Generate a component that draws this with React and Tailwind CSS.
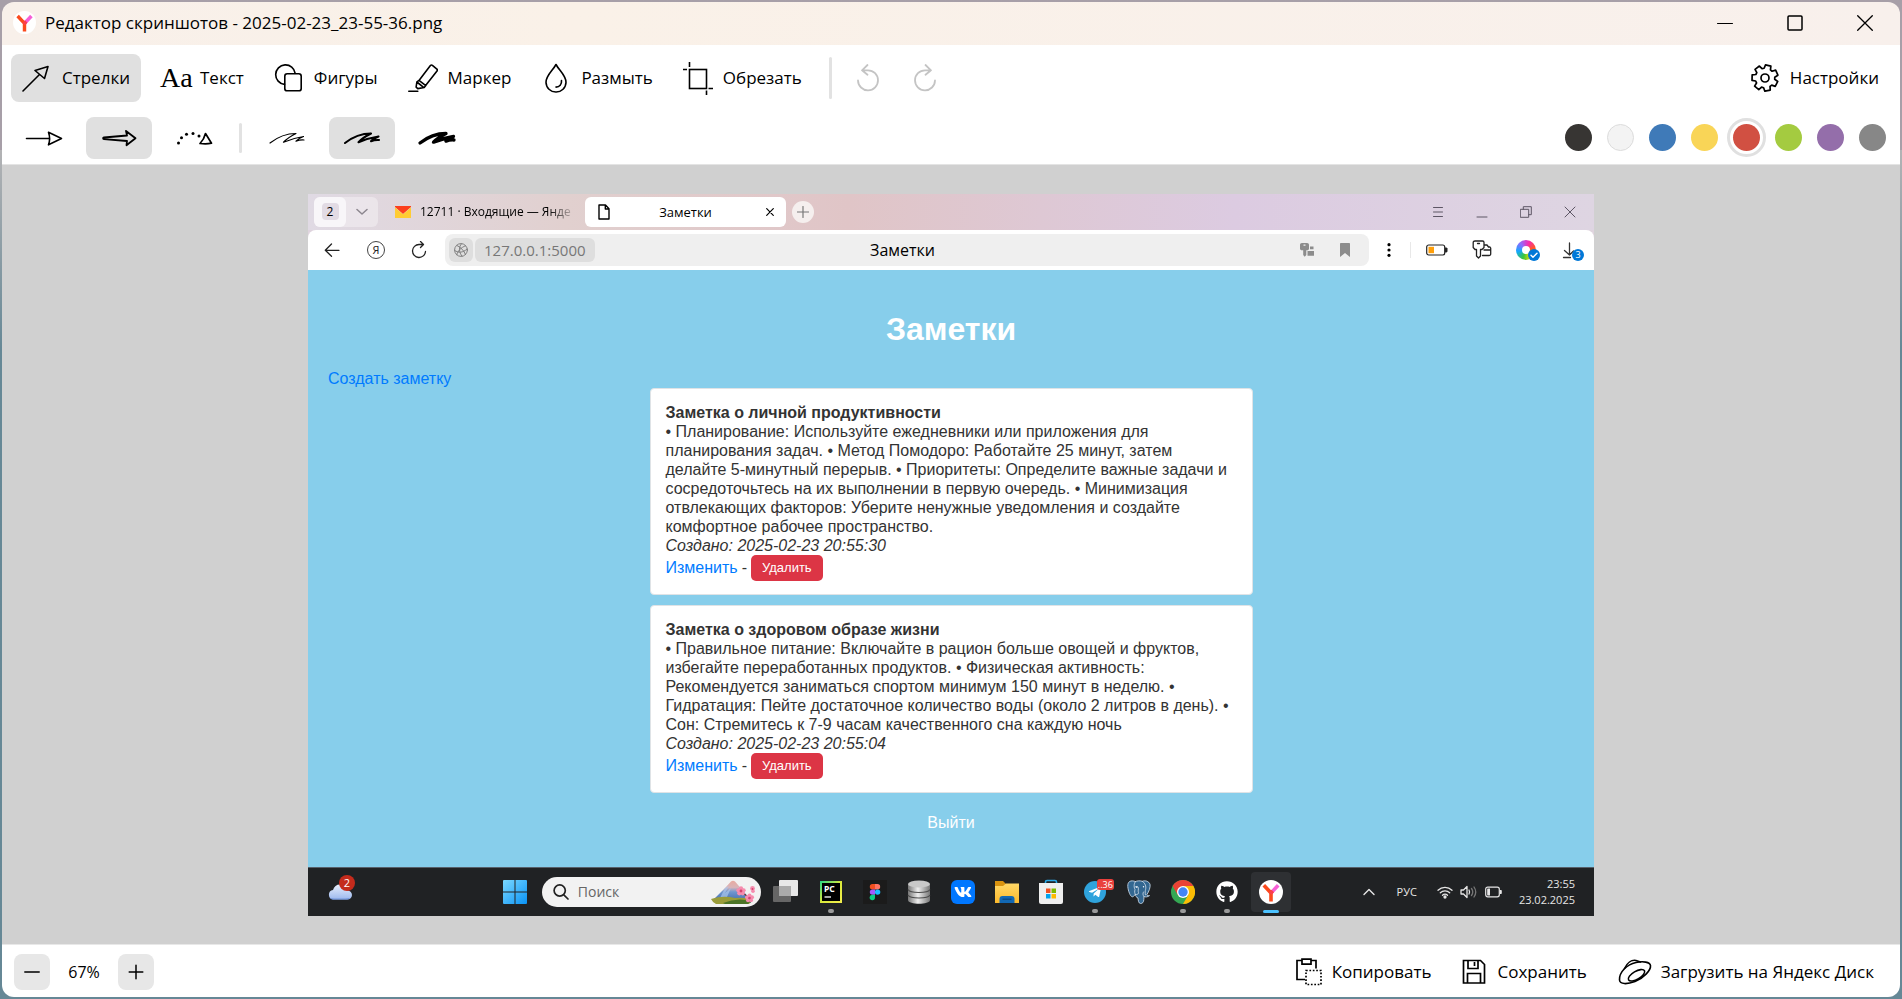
import React from "react";
import { FaVk, FaGithub, FaTelegramPlane } from "react-icons/fa";

const line = { fill: "none", stroke: "currentColor", strokeLinecap: "round", strokeLinejoin: "round" };

function YandexMark({ className }) {
  return (
    <svg viewBox="0 0 24 24" className={className} aria-hidden="true">
      <circle cx="12" cy="12" r="12" fill="#fff" />
      <g fill="none" strokeWidth="3.6">
        <path d="M19.2 5.2 12.2 12.8" stroke="#f65fd6" />
        <path d="M4.8 5.2 12 12.9V21.5" stroke="#fb4a1d" />
        <path d="M13.8 10.9 11.2 13.6" stroke="#fb3f4c" />
      </g>
    </svg>
  );
}

/* ---------- editor toolbar icons ---------- */

const ArrowToolIcon = () => (
  <svg viewBox="0 0 30 30" className="h-[30px] w-[30px]" {...line} strokeWidth="1.6" aria-hidden="true">
    <path d="M1 28 17.5 11.5M13 7.5 26 3.5 22.5 15.5Z" />
  </svg>
);
const ShapesIcon = () => (
  <svg viewBox="0 0 30 30" className="h-[30px] w-[30px]" {...line} strokeWidth="1.6" aria-hidden="true">
    <path d="M10.5 21.4A9.8 9.8 0 1 1 21.2 10.3" />
    <rect x="10.8" y="10.8" width="16.4" height="17" rx="2.4" />
  </svg>
);
const MarkerIcon = () => (
  <svg viewBox="0 0 30 30" className="h-[30px] w-[30px]" {...line} strokeWidth="1.6" aria-hidden="true">
    <path d="M.8 28.2h9M11 17.4 22.4 2.6c.6-.7 1.4-.7 2-.2l4.5 3.8c.6.5.6 1.2.1 1.9L17.8 22.3M11 17.4l6.800 5.200-1.600 1.900-6.400 1.100-1.700-1.500.8-5.200ZM9.500 19.500l5.800 4.600" />
  </svg>
);
const DropIcon = () => (
  <svg viewBox="0 0 30 30" className="h-[30px] w-[30px]" {...line} strokeWidth="1.6" aria-hidden="true">
    <path d="M15 1.500c3.500 6.500 10 11 10 17.800A9.800 9.800 0 0 1 15 29a9.800 9.800 0 0 1-10-9.700C5 12.500 11.500 8 15 1.500Z" />
    <path d="M20.500 17.500c.4 4-2 6.500-5.500 6.600" />
  </svg>
);
const CropIcon = () => (
  <svg viewBox="0 0 30 30" className="h-[30px] w-[30px] overflow-visible" {...line} strokeWidth="1.6" strokeLinecap="butt" strokeLinejoin="miter" aria-hidden="true">
    <rect x="6.500" y="6.500" width="17" height="19" />
    <path d="M6.500-1v5M0 6.500h4M23.500 27.500V32M25.500 25.500H30" />
  </svg>
);
const UndoIcon = ({ flip }) => (
  <svg viewBox="0 0 24 30" className={flip ? "h-[30px] w-6 -scale-x-100" : "h-[30px] w-6"} {...line} strokeWidth="1.8" aria-hidden="true">
    <path d="M2 17.500A10 10 0 1 0 12 7.300H6M11.500 2 6 7.300l5.500 4.500" />
  </svg>
);

const gearPath = (() => {
  const teeth = 7;
  const points = [];
  for (let i = 0; i < teeth; i++) {
    const mid = (i / teeth) * Math.PI * 2 - Math.PI / 2 + 0.25;
    for (const [offset, radius] of [[-0.34, 9.8], [-0.21, 13.2], [0.21, 13.2], [0.34, 9.8]]) {
      points.push(`${(15 + radius * Math.cos(mid + offset)).toFixed(2)} ${(15 + radius * Math.sin(mid + offset)).toFixed(2)}`);
    }
  }
  return `M${points.join("L")}Z`;
})();
const GearIcon = () => (
  <svg viewBox="0 0 30 30" className="h-[30px] w-[30px]" {...line} strokeWidth="1.7" aria-hidden="true">
    <path d={gearPath} />
    <circle cx="15" cy="15" r="4" />
  </svg>
);

const ThinArrow = () => (
  <svg viewBox="0 0 38 18" className="h-[18px] w-[38px]" {...line} strokeWidth="1.6" aria-hidden="true">
    <path d="M1.500 9.500H24M23.500 3.200 36.500 9.500 23.500 15.800C25 11.500 25 7.500 23.500 3.200Z" />
  </svg>
);
const OutlineArrow = () => (
  <svg viewBox="0 0 38 18" className="h-[18px] w-[38px]" {...line} strokeWidth="1.8" aria-hidden="true">
    <path d="M4 8.500 27 6.500 26 2 35.500 9.300 26.500 16.200 27 12 4 10.200C2.800 10 2.800 8.700 4 8.500Z" />
  </svg>
);
const DottedArrow = () => (
  <svg viewBox="0 0 38 18" className="h-[18px] w-[38px]" aria-hidden="true">
    <g fill="currentColor">
      <circle cx="3.500" cy="14" r="1.500" />
      <circle cx="6.500" cy="8.800" r="1.500" />
      <circle cx="11.500" cy="5.200" r="1.500" />
      <circle cx="18" cy="4.400" r="1.500" />
      <circle cx="24" cy="7" r="1.500" />
    </g>
    <path d="M30.500 4.500 36.500 14.200C33 15 29 15 25 14.500 28 11.500 29.500 8.500 30.500 4.500Z" {...line} strokeWidth="1.700" />
  </svg>
);
const Scribble = ({ weight }) => (
  <svg viewBox="0 0 40 18" className="h-[18px] w-10" {...line} strokeWidth={weight} aria-hidden="true">
    <path d="M3 14C10 8.500 19 4.500 29 4.500 24 7 19.500 10 16.500 13.200 23 10.500 30 8.500 36.500 7.500 33 8.800 30.500 10.500 29 12.200 31.500 11.200 34 10.800 37 11" />
  </svg>
);

const tools = [
  { label: "Стрелки", Icon: ArrowToolIcon, active: true },
  { label: "Текст", Icon: () => <span className="w-[30px] font-['Liberation_Serif',serif] text-[28px]/[30px]" aria-hidden="true">Aa</span> },
  { label: "Фигуры", Icon: ShapesIcon },
  { label: "Маркер", Icon: MarkerIcon },
  { label: "Размыть", Icon: DropIcon },
  { label: "Обрезать", Icon: CropIcon },
];

const swatches = [
  { name: "Чёрный", tone: "bg-[#373533]" },
  { name: "Белый", tone: "bg-[#f3f3f3] border border-[#dcdcdc]" },
  { name: "Синий", tone: "bg-[#3f7ab8]" },
  { name: "Жёлтый", tone: "bg-[#f9d557]" },
  { name: "Красный", tone: "bg-[#d15042]", active: true },
  { name: "Зелёный", tone: "bg-[#a4cb40]" },
  { name: "Фиолетовый", tone: "bg-[#946eaa]" },
  { name: "Серый", tone: "bg-[#878787]" },
];

function StyleButton({ label, active, children }) {
  return (
    <button type="button" aria-label={label} aria-pressed={!!active} className={`flex h-[42px] w-[66px] items-center justify-center rounded-lg ${active ? "bg-[#e0e0e0]" : ""}`}>
      {children}
    </button>
  );
}

function TitleBar() {
  return (
    <header className="flex h-[43px] items-center justify-between bg-gradient-to-r from-[#f8f0ea] via-[#faf1e8] via-30% to-[#f8f0ec] pr-[27px] pb-[2px] pl-[11px]">
      <div className="flex items-center gap-[9px]">
        <YandexMark className="h-[23px] w-[23px]" />
        <h1 className="text-[17px]/[24px]">Редактор скриншотов - 2025-02-23_23-55-36.png</h1>
      </div>
      <div className="flex gap-[54px]">
        <button type="button" aria-label="Свернуть"><svg viewBox="0 0 16 16" className="size-4" {...line} aria-hidden="true"><path d="M.5 8.500h15" /></svg></button>
        <button type="button" aria-label="Развернуть"><svg viewBox="0 0 16 16" className="size-4" {...line} strokeWidth="1.5" aria-hidden="true"><rect x="1" y="1" width="14" height="14" rx="1" /></svg></button>
        <button type="button" aria-label="Закрыть"><svg viewBox="0 0 16 16" className="size-4" {...line} strokeWidth="1.3" aria-hidden="true"><path d="m.7.7 14.600 14.600M15.300.7.7 15.300" /></svg></button>
      </div>
    </header>
  );
}

function Toolbars() {
  return (
    <div className="flex flex-col gap-[15px] border-b border-[#e4e4e4] bg-white pt-[9px] pr-2 pb-[5px] pl-[9px]">
      <div className="flex items-center justify-between">
        <div className="flex items-center gap-2">
          {tools.map(({ label, Icon, active }) => (
            <button key={label} type="button" aria-pressed={!!active} className={`flex h-12 items-center gap-[10px] rounded-lg px-[11px] ${active ? "bg-[#e0e0e0]" : ""}`}>
              <Icon />
              <span className="text-[17px]/[24px]">{label}</span>
            </button>
          ))}
          <span className="ml-2 h-[42px] w-[3px] rounded-full bg-[#e2e2e2]" />
          <div className="ml-4 flex gap-[33px] text-[#c4c4c4]">
            <button type="button" aria-label="Отменить"><UndoIcon /></button>
            <button type="button" aria-label="Повторить"><UndoIcon flip /></button>
          </div>
        </div>
        <button type="button" className="flex items-center gap-[10px] pr-[13px]">
          <GearIcon />
          <span className="text-[17px]/[24px]">Настройки</span>
        </button>
      </div>
      <div className="flex items-center justify-between">
        <div className="flex items-center gap-[9px]">
          <StyleButton label="Тонкая стрелка"><ThinArrow /></StyleButton>
          <StyleButton label="Контурная стрелка" active><OutlineArrow /></StyleButton>
          <StyleButton label="Пунктирная стрелка"><DottedArrow /></StyleButton>
          <span className="mx-[3px] h-[30px] w-[3px] rounded-full bg-[#e2e2e2]" />
          <StyleButton label="Тонкая линия"><Scribble weight="1.2" /></StyleButton>
          <StyleButton label="Средняя линия" active><Scribble weight="2.1" /></StyleButton>
          <StyleButton label="Толстая линия"><Scribble weight="3.3" /></StyleButton>
        </div>
        <div className="flex gap-[3px] pb-[2px]">
          {swatches.map(({ name, tone, active }) => (
            <button key={name} type="button" aria-label={name} aria-pressed={!!active} className={`flex size-[39px] items-center justify-center rounded-full border-[3px] ${active ? "border-[#e0e0e0]" : "border-transparent"}`}>
              <span className={`size-[27px] shrink-0 rounded-full ${tone}`} />
            </button>
          ))}
        </div>
      </div>
    </div>
  );
}

/* ---------- captured browser window ---------- */

function TabStrip() {
  return (
    <div className="flex h-9 items-center justify-between bg-[linear-gradient(to_right,#e0dae4,#e1d0cf_20%,#e0c5c7_42%,#dccbe1_72%,#ded5e2)] pr-[18px] pl-[6px]">
      <div className="flex items-center">
        <div className="flex h-[30px] w-16 items-center rounded-md bg-white/35">
          <button type="button" className="flex h-full w-8 items-center justify-center rounded-md bg-[#f8f6f9]">
            <span className="flex h-[17px] w-[17px] items-center justify-center rounded bg-[#e2dbe4] text-xs">2</span>
          </button>
          <button type="button" aria-label="Список вкладок" className="flex flex-1 justify-center text-[#8d878f]">
            <svg viewBox="0 0 12 8" className="h-2 w-3" {...line} strokeWidth="1.5" aria-hidden="true"><path d="m1 1.500 5 4.500 5-4.500" /></svg>
          </button>
        </div>
        <button type="button" className="ml-[17px] flex w-[181px] items-center gap-[9px]">
          <svg viewBox="0 0 16 12" className="h-3 w-4 shrink-0" aria-hidden="true"><path fill="#fc3f1d" d="M0 0h16v1L8 8 0 1Z" /><path fill="#ffcc33" d="M0 1.500 8 8.200l8-6.700V12H0Z" /></svg>
          <span className="bg-gradient-to-r from-black from-85% to-black/20 bg-clip-text text-xs/[18px] font-medium whitespace-nowrap text-transparent">12711 · Входящие — Янде</span>
        </button>
        <div className="ml-[9px] flex h-[30px] w-[201px] items-center rounded-md bg-white px-3">
          <svg viewBox="0 0 14 16" className="h-4 w-[14px]" {...line} strokeWidth="1.4" aria-hidden="true"><path d="M2 1h6.500L12 4.700V15H2ZM8.300 1v4H12" /></svg>
          <span className="flex-1 pr-[6px] text-center text-[13px]/[18px] font-medium">Заметки</span>
          <button type="button" aria-label="Закрыть вкладку"><svg viewBox="0 0 8 8" className="size-2" {...line} strokeWidth="1.2" aria-hidden="true"><path d="m.7.7 6.600 6.600M7.300.7.7 7.300" /></svg></button>
        </div>
        <button type="button" aria-label="Новая вкладка" className="ml-[6px] flex size-[22px] items-center justify-center rounded-full bg-[#f5efee] text-[#777]">
          <svg viewBox="0 0 12 12" className="size-3" {...line} strokeWidth="1.2" aria-hidden="true"><path d="M6 .5v11M.5 6h11" /></svg>
        </button>
      </div>
      <div className="flex items-center gap-8 text-[#5d5665]">
        <button type="button" aria-label="Меню"><svg viewBox="0 0 12 12" className="size-3" {...line} aria-hidden="true"><path d="M1.500 1.500h9M1.500 6h9M1.500 10.500h9" /></svg></button>
        <button type="button" aria-label="Свернуть окно"><svg viewBox="0 0 12 12" className="size-3" {...line} aria-hidden="true"><path d="M1 11h10" /></svg></button>
        <button type="button" aria-label="Восстановить окно"><svg viewBox="0 0 12 12" className="size-3" {...line} aria-hidden="true"><path d="M.7 3.300h8v8h-8ZM3.300 3.300V.7h8v8H8.700" /></svg></button>
        <button type="button" aria-label="Закрыть окно"><svg viewBox="0 0 12 12" className="size-3" {...line} aria-hidden="true"><path d="m1 1 10 10M11 1 1 11" /></svg></button>
      </div>
    </div>
  );
}

function Badge({ children }) {
  return <span className="absolute top-[9px] left-3 flex size-3 items-center justify-center rounded-full bg-[#0078d7] text-[9px]/[12px] text-white">{children}</span>;
}

function AddressBar() {
  return (
    <div className="bg-[#dfd4de]">
      <div className="flex h-10 items-center rounded-t-lg bg-white pr-[14px] pl-[15px]">
        <div className="flex w-[122px] shrink-0 items-center gap-[26px] text-[#222]">
          <button type="button" aria-label="Назад"><svg viewBox="0 0 18 18" className="size-[18px]" {...line} strokeWidth="1.3" aria-hidden="true"><path d="M2.500 9.300H16M8.500 3 2.300 9.300l6.200 6" /></svg></button>
          <button type="button" aria-label="Яндекс" className="flex size-[18px] items-center justify-center rounded-full border border-[#444] text-[11px]/[14px]">Я</button>
          <button type="button" aria-label="Обновить"><svg viewBox="0 0 16 18" className="h-[18px] w-4" {...line} strokeWidth="1.3" aria-hidden="true"><path d="M14.500 10.500A6.500 6.500 0 1 1 8 3.500h4M9.500.5l3 3-3 3" /></svg></button>
        </div>
        <div className="flex h-8 flex-1 items-center justify-between rounded-lg bg-[#efefef] pr-[19px] pl-1">
          <div className="flex flex-1 items-center gap-[2px] text-[#777]">
            <span className="flex size-6 items-center justify-center rounded-md bg-[#dedede]">
              <svg viewBox="0 0 14 14" className="size-[14px]" {...line} strokeWidth=".9" aria-hidden="true"><circle cx="7" cy="7" r="6.400" /><path d="M3 2.500C6.500 4 10 7.500 11.500 11.500M11.500 2.800C7 4.500 3.500 8 2.800 11.800M.8 7.500C4 10 9 10 13 6M7.500.8C4.500 4 4.800 9 8 13.200" /></svg>
            </span>
            <span className="flex h-6 items-center rounded-md bg-[#dedede] px-[9px] text-[15px]/[22px]">127.0.0.1:5000</span>
          </div>
          <span className="ml-[6px] text-base/[20px]">Заметки</span>
          <div className="flex flex-1 items-center justify-end gap-[26px] text-[#8c8c8c]">
            <svg viewBox="0 0 14 14" className="size-[14px]" fill="currentColor" aria-hidden="true"><path d="M2 0h5c1.300 0 2 .7 2 2v3.500C9 6.700 8.300 7.300 7 7.300H6.300V12L4.700 13.700 3.200 12V7.300H2C.7 7.300 0 6.700 0 5.500V2C0 .7.7 0 2 0Zm1.500 1.500v1.300h2V1.500ZM10 3.500h3.500v2.700H10ZM7.500 8H14v4.700H7.500Z" /></svg>
            <svg viewBox="0 0 10 14" className="h-[14px] w-[10px]" fill="currentColor" aria-hidden="true"><path d="M1 0h8c.6 0 1 .4 1 1v13L5 10l-5 4V1c0-.6.4-1 1-1Z" /></svg>
          </div>
        </div>
        <div className="flex items-center pl-[18px]">
          <button type="button" aria-label="Ещё"><svg viewBox="0 0 4 14" className="h-[14px] w-1" aria-hidden="true"><circle cx="2" cy="1.700" r="1.600" /><circle cx="2" cy="7" r="1.600" /><circle cx="2" cy="12.300" r="1.600" /></svg></button>
          <span className="ml-[19px] h-4 w-px bg-[#e8e8e8]" />
          <svg viewBox="0 0 22 12" className="ml-[15px] h-3 w-[22px]" aria-hidden="true"><rect x=".7" y="1" width="18" height="10" rx="2" fill="none" stroke="#222" strokeWidth="1.2" /><path d="M19 3.500h1.500l1 1v3l-1 1H19Z" fill="#222" /><rect x="2.500" y="2.800" width="5.500" height="6.400" fill="#ff9f0a" /></svg>
          <svg viewBox="0 0 20 20" className="ml-6 size-5" {...line} strokeWidth="1.3" stroke="#222" aria-hidden="true"><path d="M3 1h7.500C11.500 1 12 1.500 12 2.500v5L10 9.500H8.500V16l-2 2-2-2V9.500H3L1.200 7.500v-5C1.200 1.500 2 1 3 1ZM5.500 3.500h2M12.500 5H15l1.500 2H18l.7 1v6c0 1-.5 1.500-1.500 1.500H10.500M12 10h6.500" /></svg>
          <span className="relative ml-6 size-5">
            <span className="block size-5 rounded-full bg-[conic-gradient(from_20deg,#f62bb0,#ff5a1f,#ffe000,#38c73a,#12a8ff,#8f6bff,#f62bb0)] p-[6px]"><span className="block size-2 rounded-full bg-white" /></span>
            <Badge><svg viewBox="0 0 8 8" className="size-2" {...line} strokeWidth="1.4" aria-hidden="true"><path d="m1 4.200 2 2 4-4" /></svg></Badge>
          </span>
          <span className="relative ml-6 size-5">
            <svg viewBox="0 0 20 20" className="size-5" {...line} strokeWidth="1.3" stroke="#333" aria-hidden="true"><path d="M9.500 3v12M4.500 10.500l5 4.500 4-4M3.500 17.500h7" /></svg>
            <Badge>3</Badge>
          </span>
        </div>
      </div>
    </div>
  );
}

const notes = [
  {
    title: "Заметка о личной продуктивности",
    body: "• Планирование: Используйте ежедневники или приложения для планирования задач. • Метод Помодоро: Работайте 25 минут, затем делайте 5-минутный перерыв. • Приоритеты: Определите важные задачи и сосредоточьтесь на их выполнении в первую очередь. • Минимизация отвлекающих факторов: Уберите ненужные уведомления и создайте комфортное рабочее пространство.",
    created: "2025-02-23 20:55:30",
  },
  {
    title: "Заметка о здоровом образе жизни",
    body: "• Правильное питание: Включайте в рацион больше овощей и фруктов, избегайте переработанных продуктов. • Физическая активность: Рекомендуется заниматься спортом минимум 150 минут в неделю. • Гидратация: Пейте достаточное количество воды (около 2 литров в день). • Сон: Стремитесь к 7-9 часам качественного сна каждую ночь",
    created: "2025-02-23 20:55:04",
  },
];

function NotesPage() {
  return (
    <main className="flex flex-col bg-[#87ceeb] px-5 pt-[39px] pb-[35px] font-['Liberation_Sans',Arial,sans-serif] text-base/[19px] text-[#333]">
      <h2 className="text-center text-[32px]/[40px] font-bold text-white">Заметки</h2>
      <a href="#create" className="mt-5 self-start text-[#007bff]">Создать заметку</a>
      <ul className="mx-auto flex w-full max-w-[603px] flex-col gap-[10px]">
        {notes.map((note) => (
          <li key={note.title} className="rounded border border-[#dfe3e6] bg-white px-[15px] pt-[14px] pb-[13px]">
            <h3 className="font-bold">{note.title}</h3>
            <p>{note.body}</p>
            <p className="italic">Создано: {note.created}</p>
            <div className="flex items-center gap-1">
              <a href="#edit" className="text-[#007bff]">Изменить</a>
              <span>-</span>
              <button type="button" className="h-[26px] rounded-[5px] bg-[#dc3545] px-[11px] text-[13px]/[18px] text-white">Удалить</button>
            </div>
          </li>
        ))}
      </ul>
      <a href="#logout" className="mt-5 self-center text-white">Выйти</a>
    </main>
  );
}

/* ---------- captured taskbar ---------- */

const CloudIcon = () => (
  <svg viewBox="0 0 24 16" className="h-4 w-6" aria-hidden="true">
    <defs><linearGradient id="cloud" x2="0" y2="1"><stop stopColor="#e8effc" /><stop offset="1" stopColor="#9cb8ee" /></linearGradient></defs>
    <path fill="url(#cloud)" d="M5 15.500a4.800 4.800 0 0 1 0-9.500C6 2.500 8.500.5 12 .5c3.800 0 6.300 2.200 6.900 5.700 3 .2 5.100 2 5.100 4.800 0 2.700-2 4.500-5 4.500Z" />
    <path fill="#7396dc" d="M2 14c5 .7 14 .7 20 0-1 1.200-2 1.500-3.500 1.500H5C4 15.500 3 15 2 14Z" />
  </svg>
);
const WindowsIcon = () => (
  <svg viewBox="0 0 24 24" className="size-6" aria-hidden="true">
    <defs><linearGradient id="win" x2="1" y2="1"><stop stopColor="#7bd8ff" /><stop offset="1" stopColor="#0a93f5" /></linearGradient></defs>
    <path fill="url(#win)" d="M1 0h10.500v11.500H0V1Q0 0 1 0ZM12.500 0H23q1 0 1 1v10.500H12.500ZM0 12.500h11.500V24H1q-1 0-1-1ZM12.500 12.500H24V23q0 1-1 1H12.500Z" />
  </svg>
);
const MountainIcon = () => (
  <svg viewBox="0 0 46 24" className="h-6 w-[46px] shrink-0" aria-hidden="true">
    <defs><linearGradient id="peak" x2="0" y2="1"><stop stopColor="#e8aaa0" /><stop offset=".3" stopColor="#d9b4b8" /><stop offset=".5" stopColor="#6f96cf" /><stop offset="1" stopColor="#3c66a8" /></linearGradient></defs>
    <path fill="url(#peak)" d="M2 20 14 8 20 1.500q2-1.500 4 0L40 20v3H5Z" />
    <path fill="#a9c6ec" d="m14 8 4-2-4 7 6-5-4 9-7 1Z" opacity=".7" />
    <path fill="#9a9c3a" d="M0 19q12-4 24-1 12-1 18 2l-4 4H5Q2 23 0 19Z" />
    <path fill="#4b7426" d="M12 23q14-6 28-2l-3 3H14Z" />
    <path d="M27 10q8 4 12 10" stroke="#5c3424" strokeWidth="1.3" fill="none" />
    <g fill="#f58cae">
      <circle cx="30" cy="8.300" r="2.100" /><circle cx="32.600" cy="10.300" r="2.100" /><circle cx="31.700" cy="13.300" r="2.100" /><circle cx="28.300" cy="13.300" r="2.100" /><circle cx="27.400" cy="10.300" r="2.100" />
      <circle cx="38.500" cy="15.500" r="2" /><circle cx="41" cy="17.300" r="2" /><circle cx="40" cy="20.300" r="2" /><circle cx="37" cy="20.300" r="2" /><circle cx="36" cy="17.300" r="2" />
      <circle cx="41.500" cy="8.500" r="2.400" /><circle cx="42" cy="11.300" r="1.800" />
    </g>
    <g fill="#d6426f"><circle cx="30" cy="11" r="1.400" /><circle cx="38.500" cy="18" r="1.300" /><circle cx="41.500" cy="9" r=".9" /></g>
  </svg>
);
const TaskViewIcon = () => (
  <svg viewBox="0 0 26 24" className="h-6 w-[26px]" aria-hidden="true"><rect y="6" width="18" height="16" rx="1" fill="#666" /><rect x="6" width="19" height="16" rx="1" fill="#e8e8e8" /><path d="M6 6h12v10H6Z" fill="#aaa" /></svg>
);
const PyCharmIcon = () => (
  <svg viewBox="0 0 22 22" className="size-[22px]" aria-hidden="true">
    <defs><linearGradient id="pc" x2="1" y2="1"><stop stopColor="#21d789" /><stop offset=".5" stopColor="#d9e83a" /><stop offset="1" stopColor="#f3ee4e" /></linearGradient></defs>
    <rect width="22" height="22" fill="url(#pc)" /><rect x="2" y="2" width="18" height="18" fill="#000" />
    <text x="4" y="11" fill="#fff" fontFamily="Noto Sans" fontWeight="700" fontSize="8.5">PC</text><path d="M4.500 16h6.500" stroke="#fff" strokeWidth="1.3" />
  </svg>
);
const FigmaIcon = () => (
  <svg viewBox="0 0 24 24" className="size-6" aria-hidden="true">
    <path fill="#1b1b1b" d="M0 0h24v24H0Z" /><path fill="#f24e1e" d="M12 4H9.500a2.700 2.700 0 0 0 0 5.400H12Z" /><path fill="#ff7262" d="M12 4h2.500a2.700 2.700 0 0 1 0 5.400H12Z" /><path fill="#a259ff" d="M12 9.400H9.500a2.700 2.700 0 0 0 0 5.400H12Z" /><circle cx="14.600" cy="12.100" r="2.700" fill="#1abcfe" /><path fill="#0acf83" d="M12 14.800H9.500a2.700 2.700 0 1 0 2.500 2.700Z" />
  </svg>
);
const DatabaseIcon = () => (
  <svg viewBox="0 0 24 24" className="size-6" aria-hidden="true">
    <defs><linearGradient id="db"><stop stopColor="#777" /><stop offset=".45" stopColor="#eee" /><stop offset="1" stopColor="#777" /></linearGradient></defs>
    <path fill="url(#db)" d="M1 4v16c0 5 22 5 22 0V4Z" /><path d="M1 9.500c2 4 20 4 22 0M1 15c2 4 20 4 22 0" fill="none" stroke="#4d4d4d" strokeWidth="1.2" /><ellipse cx="12" cy="4" rx="11" ry="3.600" fill="#c9c9c9" />
  </svg>
);
const FolderIcon = () => (
  <svg viewBox="0 0 26 24" className="h-6 w-[26px]" aria-hidden="true">
    <defs><linearGradient id="fold" x2="0" y2="1"><stop stopColor="#ffd867" /><stop offset="1" stopColor="#fdb92b" /></linearGradient></defs>
    <path fill="#d9930f" d="M1 1h8l3 3v4H1Z" /><path fill="url(#fold)" d="M1 6h8l3-2.500h13V23H1Z" /><path fill="#1268b4" d="M5.500 23v-4q0-3 3-3h9q3 0 3 3v4Z" /><path fill="#0b4b88" d="M8.500 18.500h9v1.500h-9Z" />
  </svg>
);
const StoreIcon = () => (
  <svg viewBox="0 0 26 26" className="size-[26px]" aria-hidden="true">
    <path d="M7.500 6V3q0-1.500 1.500-1.500h8q1.500 0 1.500 1.500v3" fill="none" stroke="#29a9e8" strokeWidth="1.6" /><path fill="#efefef" d="M1 4h24v19q0 2-2 2H3q-2 0-2-2Z" /><path fill="#f25022" d="M8 9.500h4.500V14H8Z" /><path fill="#7fba00" d="M13.500 9.500H18V14h-4.500Z" /><path fill="#00a4ef" d="M8 15h4.500v4.500H8Z" /><path fill="#ffb900" d="M13.500 15H18v4.500h-4.500Z" />
  </svg>
);
const ElephantIcon = () => (
  <svg viewBox="0 0 24 24" className="size-6" aria-hidden="true">
    <g stroke="#c3d3e2" strokeWidth=".9" strokeLinejoin="round" strokeLinecap="round">
      <path fill="#336791" d="M8.500 1.500C3.500-.3.5 1.500.8 6.500 1.100 11 3.500 16.800 5.300 16.800c1.200 0 2-1.300 3-2.300.2 1.600.8 2.500 2.700 3.500.3 2.500.5 5.400 2.500 5.500 2 0 3.200-1.200 3.300-4l.2-3c1.300.7 3.800.6 5.500-.9-1.200.2-2.500 0-2.800-.7C22 11.500 23.700 6.800 23 4.300 21.800 1 18 .2 15.300 1.300 13 .6 10.300.7 8.500 1.500Z" />
      <path fill="none" d="M8.500 1.500C6.500 3.500 7 8 8 9.500c-.5 2-.5 3.500.3 5M8 7c1.500-1 3-.7 3.300.5.3 2-.5 3.500.2 5 .3 1-.8 2.500-3.200 2M15.300 1.300c3 2 4 5 3.300 8-.4 2-.6 3-.2 5.500M16.800 16.500c-1.200-2-1-3-.3-4.500" />
    </g>
    <circle cx="9.800" cy="7.200" r=".7" fill="#fff" /><circle cx="16.500" cy="6.800" r=".7" fill="#fff" />
  </svg>
);
const ChromeIcon = () => (
  <svg viewBox="0 0 24 24" className="size-6" aria-hidden="true">
    <circle cx="12" cy="12" r="12" fill="#34a853" /><path fill="#ea4335" d="M1.600 6A12 12 0 0 1 22.400 6H12L6.800 15Z" /><path fill="#fbbc05" d="M22.400 6A12 12 0 0 1 12 24l5.200-9L12 6Z" /><circle cx="12" cy="12" r="6" fill="#fff" /><circle cx="12" cy="12" r="4.700" fill="#4285f4" />
  </svg>
);

const apps = [
  { name: "PyCharm", icon: <PyCharmIcon />, running: true },
  { name: "Figma", icon: <FigmaIcon /> },
  { name: "База данных", icon: <DatabaseIcon /> },
  { name: "ВКонтакте", icon: <span className="flex size-6 items-center justify-center rounded-md bg-[#0077ff] text-white"><FaVk className="size-[18px]" /></span> },
  { name: "Проводник", icon: <FolderIcon /> },
  { name: "Магазин", icon: <StoreIcon /> },
  {
    name: "Telegram",
    running: true,
    icon: (
      <span className="relative flex size-[22px] items-center justify-center rounded-full bg-[#2fa3dc] text-white">
        <FaTelegramPlane className="size-[14px]" />
        <span className="absolute -top-[2px] left-[13px] rounded-[3px] bg-[#e9403c] px-px text-[9px]/[11px]">..36</span>
      </span>
    ),
  },
  { name: "PostgreSQL", icon: <ElephantIcon /> },
  { name: "Chrome", icon: <ChromeIcon />, running: true },
  { name: "GitHub", icon: <FaGithub className="size-[22px] text-white" />, running: true },
  { name: "Яндекс Браузер", icon: <YandexMark className="size-6" />, active: true },
];

function Taskbar() {
  return (
    <footer className="flex h-[49px] items-center justify-between border-t border-[#56606a] bg-[#202224] pr-[19px] pl-5 text-[#e6e6e6]">
      <button type="button" aria-label="Погода" className="relative mr-[79px] flex">
        <CloudIcon />
        <span className="absolute -top-[9px] left-[11px] flex size-4 items-center justify-center rounded-full bg-[#c42b1c] text-[11px]/[16px] text-white">2</span>
      </button>
      <div className="flex items-center">
        <button type="button" aria-label="Пуск"><WindowsIcon /></button>
        <label className="ml-[15px] flex h-[30px] w-[219px] items-center overflow-hidden rounded-full bg-[#f2f2f2] pr-[4px] pl-[11px] text-[#222]">
          <svg viewBox="0 0 16 16" className="size-4 shrink-0" {...line} strokeWidth="1.7" aria-hidden="true"><circle cx="6.700" cy="6.500" r="5.600" /><path d="m10.800 10.800 4.200 4.200" /></svg>
          <input aria-label="Поиск" placeholder="Поиск" className="ml-[9px] w-full min-w-0 bg-transparent text-[14px]/[20px] outline-none placeholder:text-[#666]" />
          <MountainIcon />
        </label>
        <button type="button" aria-label="Представление задач" className="mr-3 ml-3"><TaskViewIcon /></button>
        <div className="flex items-center gap-1">
          {apps.map(({ name, icon, running, active }) => (
            <button key={name} type="button" aria-label={name} className={`relative flex size-10 items-center justify-center rounded ${active ? "bg-[#2e3033]" : ""}`}>
              {icon}
              {running && <span className="absolute -bottom-[1px] h-1 w-[6px] rounded-full bg-[#9a9a9a]" />}
              {active && <span className="absolute -bottom-[1px] h-[3px] w-4 rounded-full bg-[#4cc2ff]" />}
            </button>
          ))}
        </div>
      </div>
      <div className="flex items-center text-[11px]/[16px]">
        <svg viewBox="0 0 12 8" className="h-2 w-3" {...line} strokeWidth="1.4" aria-hidden="true"><path d="m1 6.500 5-5 5 5" /></svg>
        <span className="ml-[22px]">РУС</span>
        <svg viewBox="0 0 16 14" className="ml-5 h-[14px] w-4" {...line} strokeWidth="1.3" aria-hidden="true"><path d="M1 5.200a10 10 0 0 1 14 0M3.300 7.800a6.700 6.700 0 0 1 9.400 0M5.500 10.200a3.500 3.500 0 0 1 5 0" /><circle cx="8" cy="12" r="1" fill="currentColor" /></svg>
        <svg viewBox="0 0 17 14" className="ml-[7px] h-[14px] w-[17px]" {...line} strokeWidth="1.3" aria-hidden="true"><path d="M1 5h2.500L7 1.500v11L3.500 9H1ZM9 5q1.200 2 0 4" /><path stroke="#777" d="M11.500 3.500q2.500 3.500 0 7M14 2q3.500 5 0 10" /></svg>
        <svg viewBox="0 0 17 12" className="ml-2 h-3 w-[17px]" aria-hidden="true"><rect x=".7" y="1.200" width="13.600" height="9.600" rx="2" fill="none" stroke="currentColor" strokeWidth="1.2" /><path fill="currentColor" d="M2.200 3q0-.4.5-.4H5v6.800H2.700q-.5 0-.5-.4ZM15 4h1q.8 0 .8.8v2.400q0 .8-.8.8h-1Z" /></svg>
        <div className="ml-[17px] text-right"><div>23:55</div><div>23.02.2025</div></div>
      </div>
    </footer>
  );
}

/* ---------- editor footer ---------- */

const CopyIcon = () => (
  <svg viewBox="0 0 28 28" className="size-7" fill="none" stroke="currentColor" strokeWidth="1.7" aria-hidden="true">
    <path d="M7 2.500H2v19h8M16 2.500h5v8M7 1.200h9v5H7Z" /><path d="M11 12.500h15v14H11Z" strokeDasharray="1.7 1.7" />
  </svg>
);
const SaveIcon = () => (
  <svg viewBox="0 0 24 28" className="h-7 w-6" fill="none" stroke="currentColor" strokeWidth="1.7" aria-hidden="true">
    <path d="M1.500 2.500h17l4 4v18.500h-21ZM6 2.500v8h10v-8M12.500 4v4M5.500 25V15.500h13V25" />
  </svg>
);
const DiskIcon = () => (
  <svg viewBox="0 0 34 28" className="h-7 w-[34px]" {...line} strokeWidth="1.6" aria-hidden="true">
    <path d="M1.500 22C1 14 9 6.500 18 4.500c7-1.500 14-.5 14.500 3C33 12 26 20 17 23.500 9 26.500 2 26.500 1.500 22Z" />
    <ellipse cx="18.500" cy="17.300" rx="9.200" ry="4" transform="rotate(-30 18.500 17.300)" />
    <path d="M6.500 10.500C9 5 13.500 1.500 18 2.500l4.500 1.500" />
  </svg>
);

function EditorFooter() {
  return (
    <footer className="flex h-[53px] items-center justify-between border-t border-[#e8e8e8] bg-white px-3 pt-[2px] text-[17px]/[24px]">
      <div className="flex items-center">
        <button type="button" aria-label="Уменьшить" className="flex size-9 items-center justify-center rounded-lg bg-[#e7e7e7]"><svg viewBox="0 0 16 16" className="size-4" {...line} strokeWidth="1.5" aria-hidden="true"><path d="M.8 8h14.400" /></svg></button>
        <span className="w-[68px] text-center text-base/6">67%</span>
        <button type="button" aria-label="Увеличить" className="flex size-9 items-center justify-center rounded-lg bg-[#e7e7e7]"><svg viewBox="0 0 16 16" className="size-4" {...line} strokeWidth="1.5" aria-hidden="true"><path d="M1.200 8h13.600M8 1.200v13.600" /></svg></button>
      </div>
      <div className="flex items-center gap-[31px] pr-[14px]">
        <button type="button" className="flex items-center gap-[9px]"><CopyIcon />Копировать</button>
        <button type="button" className="flex items-center gap-[11px]"><SaveIcon />Сохранить</button>
        <button type="button" className="flex items-center gap-[9px]"><DiskIcon />Загрузить на Яндекс Диск</button>
      </div>
    </footer>
  );
}

export default function App() {
  return (
    <div className="flex min-h-screen flex-col bg-gradient-to-b from-[#a79fa8] from-15% via-[#b3b3b5] via-15% to-[#668896] to-35% p-[2px] font-['Open_Sans','Noto_Sans',sans-serif] text-black">
      <div className="flex flex-1 flex-col overflow-hidden rounded-xl">
        <TitleBar />
        <Toolbars />
        <div className="flex flex-1 items-center justify-center bg-[#d0d0d0]">
          <div className="w-full max-w-[1286px]">
            <TabStrip />
            <AddressBar />
            <NotesPage />
            <Taskbar />
          </div>
        </div>
        <EditorFooter />
      </div>
    </div>
  );
}
